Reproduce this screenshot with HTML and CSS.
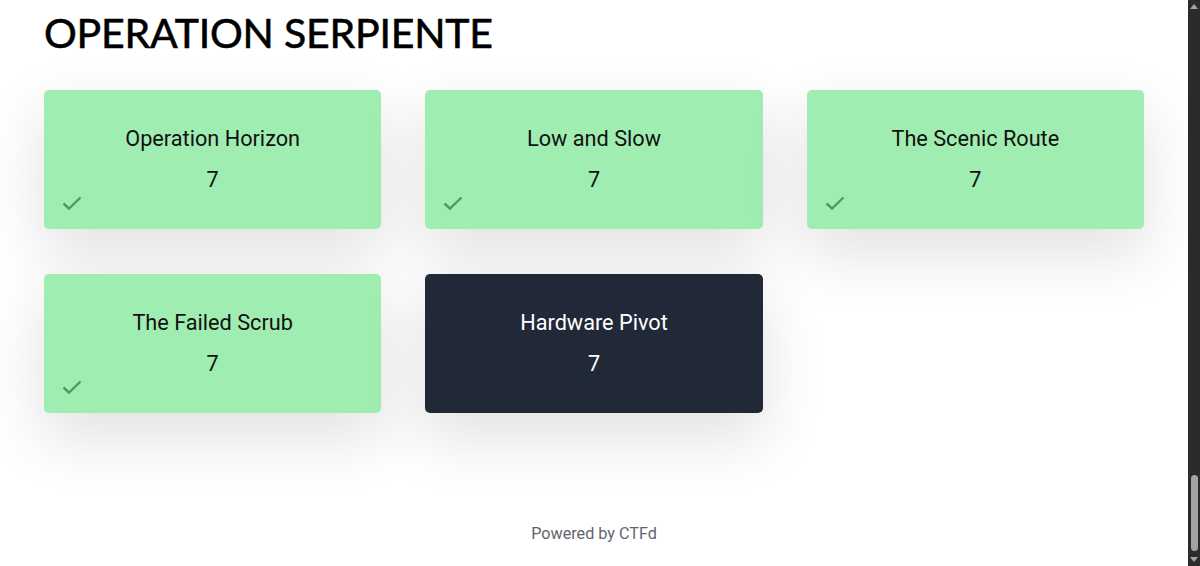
FILE: index.html
```html
<!DOCTYPE html>
<html lang="en">
<head>
    <meta charset="UTF-8">
    <meta name="viewport" content="width=device-width, initial-scale=1.0">
    <title>Challenges</title>
    <link rel="stylesheet" href="styles.css">
</head>
<body>
    <div class="page">
        <main class="container">
            <h1 class="category">OPERATION SERPIENTE</h1>

            <div class="challenges">
                <div class="challenge solved">
                    <p class="challenge-name">Operation Horizon</p>
                    <p class="challenge-value">7</p>
                    <svg class="solved-mark" viewBox="0 0 20 16" width="20" height="16"><path d="M1.5 8.5 L7 13.5 L18.5 2.5" fill="none" stroke="currentColor" stroke-width="2.4"/></svg>
                </div>
                <div class="challenge solved">
                    <p class="challenge-name">Low and Slow</p>
                    <p class="challenge-value">7</p>
                    <svg class="solved-mark" viewBox="0 0 20 16" width="20" height="16"><path d="M1.5 8.5 L7 13.5 L18.5 2.5" fill="none" stroke="currentColor" stroke-width="2.4"/></svg>
                </div>
                <div class="challenge solved">
                    <p class="challenge-name">The Scenic Route</p>
                    <p class="challenge-value">7</p>
                    <svg class="solved-mark" viewBox="0 0 20 16" width="20" height="16"><path d="M1.5 8.5 L7 13.5 L18.5 2.5" fill="none" stroke="currentColor" stroke-width="2.4"/></svg>
                </div>
                <div class="challenge solved">
                    <p class="challenge-name">The Failed Scrub</p>
                    <p class="challenge-value">7</p>
                    <svg class="solved-mark" viewBox="0 0 20 16" width="20" height="16"><path d="M1.5 8.5 L7 13.5 L18.5 2.5" fill="none" stroke="currentColor" stroke-width="2.4"/></svg>
                </div>
                <div class="challenge">
                    <p class="challenge-name">Hardware Pivot</p>
                    <p class="challenge-value">7</p>
                </div>
            </div>
        </main>

        <footer class="footer">Powered by CTFd</footer>
    </div>

    <div class="scrollbar">
        <span class="arrow up"></span>
        <div class="track"><div class="thumb"></div></div>
        <span class="arrow down"></span>
    </div>
</body>
</html>
```

FILE: styles.css
```css
body {
    margin: 0;
    height: 100vh;
    display: flex;
    overflow: hidden;
    background-color: #fff;
    font-family: Roboto, "Liberation Sans", sans-serif;
    color: #000;
}
.page {
    flex: 1;
    display: flex;
    flex-direction: column;
}
.container {
    width: 1100px;
    margin: 0 auto;
    flex: 1;
}
.category {
    font-family: Lato, "Open Sans", sans-serif;
    font-size: 41px;
    font-weight: 400;
    -webkit-text-stroke: 0.6px #000;
    letter-spacing: -0.2px;
    line-height: 50px;
    margin: 8px 0 32px;
}
.challenges {
    display: grid;
    grid-template-columns: repeat(3, 1fr);
    column-gap: 44px;
    row-gap: 45px;
}
.challenge {
    position: relative;
    height: 139px;
    box-sizing: border-box;
    padding-top: 34px;
    border-radius: 5px;
    background-color: #212837;
    color: #fff;
    text-align: center;
    box-shadow: 0 24px 60px 4px rgba(0,0,0,0.11);
}
.challenge.solved {
    background-color: #a0edb2;
    color: #111;
}
.challenge p {
    margin: 0;
    font-size: 21.7px;
    line-height: 28px;
}
.challenge-name {
    padding-top: 1px;
}
.challenge-value {
    margin-top: 13px !important;
}
.solved-mark {
    position: absolute;
    bottom: 18px;
    left: 18px;
    color: #4a9e5a;
}
.footer {
    text-align: center;
    color: #5f666d;
    font-size: 16.2px;
    line-height: 24px;
    padding-bottom: 20px;
}
.scrollbar {
    width: 12px;
    background-color: #2b2b2b;
    display: flex;
    flex-direction: column;
    align-items: center;
}
.track {
    flex: 1;
    width: 100%;
    display: flex;
    flex-direction: column;
    justify-content: flex-end;
    align-items: center;
    padding-bottom: 2px;
}
.thumb {
    width: 7px;
    height: 76px;
    border-radius: 4px;
    background-color: #a3a3a3;
}
.arrow {
    width: 0;
    height: 0;
    margin: 4px 0;
    border-left: 4px solid transparent;
    border-right: 4px solid transparent;
}
.arrow.up {
    border-bottom: 5px solid #a3a3a3;
}
.arrow.down {
    border-top: 5px solid #a3a3a3;
}
```
